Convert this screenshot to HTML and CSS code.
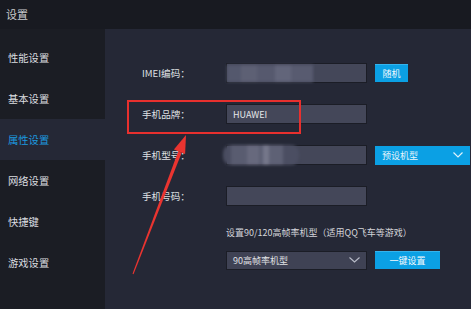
FILE: index.html
```html
<!DOCTYPE html>
<html lang="zh">
<head>
<meta charset="utf-8">
<title>设置</title>
<link rel="stylesheet" href="styles.css">
</head>
<body>
<div class="app">
  <div class="titlebar">设置</div>
  <div class="body">
    <nav class="sidebar">
      <div class="nav-item">性能设置</div>
      <div class="nav-item">基本设置</div>
      <div class="nav-item active">属性设置</div>
      <div class="nav-item">网络设置</div>
      <div class="nav-item">快捷键</div>
      <div class="nav-item">游戏设置</div>
    </nav>
    <main class="main">
      <div class="row">
        <span class="label">IMEI编码：</span>
        <div class="input"><div class="blur blur-imei"></div></div>
        <button class="btn btn-small">随机</button>
      </div>
      <div class="row">
        <span class="label">手机品牌：</span>
        <div class="input"><span class="value">HUAWEI</span></div>
      </div>
      <div class="row">
        <span class="label">手机型号：</span>
        <div class="input"><div class="blur blur-model"></div></div>
        <div class="select select-blue">预设机型
          <svg class="chev" width="10" height="6" viewBox="0 0 10 6"><path d="M0.5 0.5 L5 5 L9.5 0.5" fill="none" stroke="#dff2fb" stroke-width="1.2"/></svg>
        </div>
      </div>
      <div class="row">
        <span class="label">手机号码：</span>
        <div class="input"></div>
      </div>
      <div class="note">设置90/120高帧率机型（适用QQ飞车等游戏）</div>
      <div class="row row-bottom">
        <div class="select select-dark">90高帧率机型
          <svg class="chev" width="11" height="6" viewBox="0 0 11 6"><path d="M0.5 0.5 L5.5 5 L10.5 0.5" fill="none" stroke="#b9bcc8" stroke-width="1.1"/></svg>
        </div>
        <button class="btn btn-wide">一键设置</button>
      </div>
    </main>
  </div>
  <div class="highlight"></div>
  <svg class="arrow" width="471" height="309" viewBox="0 0 471 309">
    <polygon points="132.5,273.8 133.5,274.2 181.7,152.65 178.3,151.35" fill="#ea3430"/>
    <polygon points="186,135 173.9,149.6 185.1,154" fill="#ea3430"/>
  </svg>
</div>
</body>
</html>
```

FILE: styles.css
```css
* { box-sizing: border-box; }
html, body {
  margin: 0;
  padding: 0;
  width: 471px;
  height: 309px;
  overflow: hidden;
  background: #252836;
  font-family: "Noto Sans CJK SC", "Noto Sans", sans-serif;
}
.app {
  position: relative;
  width: 471px;
  height: 309px;
  display: flex;
  flex-direction: column;
}
.titlebar {
  height: 29px;
  line-height: 28px;
  padding-left: 6px;
  background: #181a21;
  color: #c9cacd;
  font-size: 11px;
}
.body {
  flex: 1;
  display: flex;
}
.sidebar {
  width: 105px;
  background: #1b1d24;
  padding-top: 8px;
}
.nav-item {
  height: 41px;
  line-height: 41px;
  padding-left: 8px;
  color: #dcdde0;
  font-size: 10.3px;
}
.nav-item.active {
  background: #252836;
  color: #1c9ae0;
}
.main {
  flex: 1;
  background: #252836;
  padding: 34px 0 0 37px;
}
.row {
  display: flex;
  align-items: center;
  height: 20px;
  margin-bottom: 21px;
}
.label {
  width: 84px;
  color: #dfe0e4;
  font-size: 9.6px;
}
.input {
  position: relative;
  width: 141px;
  height: 20px;
  background: #444759;
  border: 1px solid #1b1d26;
  overflow: visible;
  display: flex;
  align-items: center;
}
.value {
  padding-left: 6px;
  color: #e6e7ea;
  font-size: 9px;
}
.blur {
  position: absolute;
  filter: blur(1.5px);
}
.blur-imei {
  left: 0;
  top: 1px;
  width: 86px;
  height: 17px;
  background:
    linear-gradient(90deg, #54586d 0 14px, #5d6074 14px 30px, #56596e 30px 48px, #62657a 48px 64px, #585b70 64px 86px);
}
.blur-model {
  left: -4px;
  top: -1px;
  width: 76px;
  height: 20px;
  border-radius: 8px;
  background:
    linear-gradient(90deg, #4a4d61 0 8px, #595c70 8px 24px, #67697d 24px 36px, #5c5f73 36px 40px, #75778a 40px 46px, #5e6175 46px 60px, #4b4e62 60px 76px);
}
.btn {
  border: none;
  margin: 0 0 0 8px;
  padding: 0;
  height: 18px;
  background: #0ba0e4;
  color: #f2f9fd;
  font-family: "Noto Sans CJK SC", "Noto Sans", sans-serif;
  font-size: 9px;
  border-top: 1px solid #35b3ec;
}
.btn-small { width: 33px; }
.btn-wide { width: 65px; }
.select {
  display: flex;
  align-items: center;
  justify-content: space-between;
  height: 19px;
  font-size: 9px;
}
.select-blue {
  margin-left: 8px;
  width: 95px;
  background: #0ba0e4;
  color: #e9f6fc;
  padding: 0 7px 0 7px;
}
.select-dark {
  width: 141px;
  background: #3f4254;
  border: 1px solid #1b1d26;
  color: #e0e1e5;
  padding: 0 6px 0 6px;
}
.note {
  margin: 20px 0 11px 84px;
  color: #d4d5da;
  font-size: 9px;
  line-height: 12px;
}
.row-bottom {
  margin-left: 84px;
}
.highlight {
  position: absolute;
  left: 127px;
  top: 100px;
  width: 174px;
  height: 34px;
  border: 2px solid #e8302e;
}
.arrow {
  position: absolute;
  left: 0;
  top: 0;
}
```
